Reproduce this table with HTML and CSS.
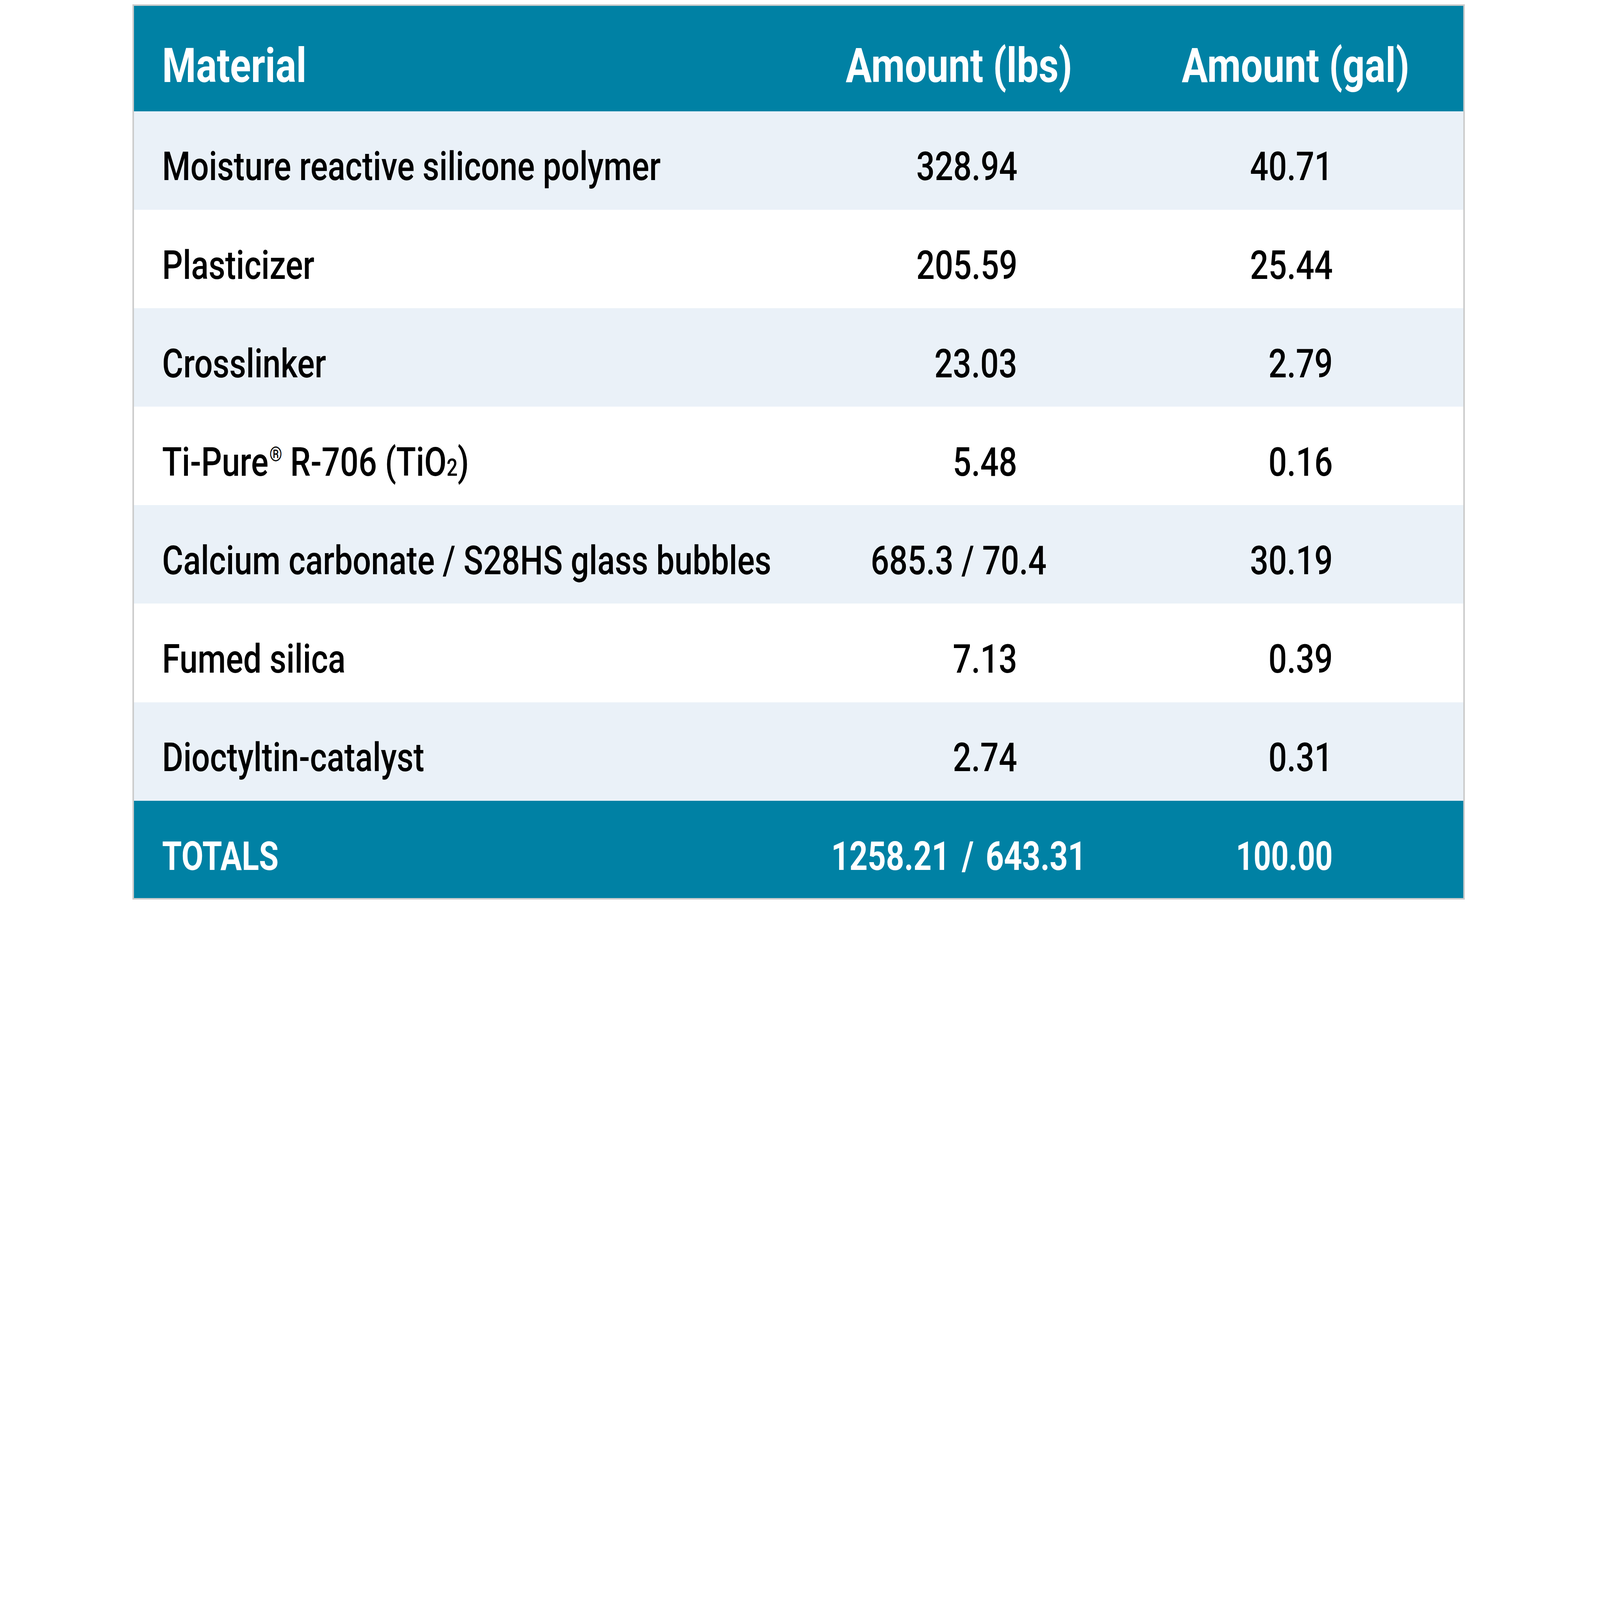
FILE: index.html
```html
<!DOCTYPE html>
<html lang="en">
<head>
<meta charset="utf-8">
<title>Formulation</title>
<link rel="stylesheet" href="styles.css">
</head>
<body>
<div class="page">
  <table class="recipe">
    <colgroup>
      <col class="c-mat">
      <col class="c-lbs">
      <col class="c-gal">
    </colgroup>
    <thead>
      <tr class="head">
        <th class="left"><span class="t">Material</span></th>
        <th class="center"><span class="t">Amount (lbs)</span></th>
        <th class="center"><span class="t">Amount (gal)</span></th>
      </tr>
    </thead>
    <tbody>
      <tr class="odd">
        <td class="left"><span class="t">Moisture reactive silicone polymer</span></td>
        <td class="lbs"><span class="t">328.94</span></td>
        <td class="gal"><span class="t">40.71</span></td>
      </tr>
      <tr>
        <td class="left"><span class="t">Plasticizer</span></td>
        <td class="lbs"><span class="t">205.59</span></td>
        <td class="gal"><span class="t">25.44</span></td>
      </tr>
      <tr class="odd">
        <td class="left"><span class="t">Crosslinker</span></td>
        <td class="lbs"><span class="t">23.03</span></td>
        <td class="gal"><span class="t">2.79</span></td>
      </tr>
      <tr>
        <td class="left"><span class="t">Ti-Pure<sup class="reg">®</sup> R-706 (TiO<sub class="sub">2</sub>)</span></td>
        <td class="lbs"><span class="t">5.48</span></td>
        <td class="gal"><span class="t">0.16</span></td>
      </tr>
      <tr class="odd">
        <td class="left"><span class="t">Calcium carbonate / S28HS glass bubbles</span></td>
        <td class="center"><span class="t">685.3 / 70.4</span></td>
        <td class="gal"><span class="t">30.19</span></td>
      </tr>
      <tr>
        <td class="left"><span class="t">Fumed silica</span></td>
        <td class="lbs"><span class="t">7.13</span></td>
        <td class="gal"><span class="t">0.39</span></td>
      </tr>
      <tr class="odd">
        <td class="left"><span class="t">Dioctyltin-catalyst</span></td>
        <td class="lbs"><span class="t">2.74</span></td>
        <td class="gal"><span class="t">0.31</span></td>
      </tr>
    </tbody>
    <tfoot>
      <tr class="total">
        <td class="left"><span class="t">TOTALS</span></td>
        <td class="center"><span class="t">1258.21 / 643.31</span></td>
        <td class="gal"><span class="t">100.00</span></td>
      </tr>
    </tfoot>
  </table>
</div>
</body>
</html>
```

FILE: styles.css
```css
:root {
  /* one pixel of the 7278px-wide design */
  --u: calc(100vw / 7278);
}

html, body {
  margin: 0;
  padding: 0;
  background: #ffffff;
  overflow: hidden;
}

.page {
  padding-top: calc(19 * var(--u));
  padding-left: calc(603 * var(--u));
}

.recipe {
  border-collapse: separate;
  border-spacing: 0;
  table-layout: fixed;
  width: calc(6061 * var(--u));
  border: calc(8 * var(--u)) solid #cccccc;
  font-family: Roboto, "Liberation Sans", sans-serif;
  color: #000000;
}

.c-mat { width: calc(2981 * var(--u)); }
.c-lbs { width: calc(1538 * var(--u)); }
.c-gal { width: calc(1526 * var(--u)); }

.recipe th,
.recipe td {
  padding: calc(57 * var(--u)) 0 0 0;
  vertical-align: middle;
  white-space: nowrap;
  line-height: normal;
  font-size: calc(181 * var(--u));
  font-weight: 500;
}

.t {
  display: inline-block;
  transform: scaleX(0.815);
  transform-origin: left center;
}

.head {
  height: calc(480 * var(--u));
  background: #0081a4;
}

.recipe .head th {
  color: #ffffff;
  font-size: calc(218 * var(--u));
  font-weight: 700;
  padding-top: calc(66 * var(--u));
}

.head .t {
  transform: scaleX(0.81);
}

tbody tr {
  height: calc(448 * var(--u));
  background: #ffffff;
}

tbody tr.odd {
  background: #eaf1f8;
}

.total {
  height: calc(443 * var(--u));
  background: #0081a4;
}

.recipe .total td {
  color: #ffffff;
  font-weight: 700;
  padding-top: calc(65 * var(--u));
}

.total .t {
  transform: scaleX(0.80);
}

.recipe .total .center {
  word-spacing: calc(23 * var(--u));
}

.recipe .total .gal .t {
  transform: scaleX(0.77);
}

.recipe .left {
  text-align: left;
  padding-left: calc(127 * var(--u));
}

.recipe .center {
  text-align: center;
}

.recipe .center .t {
  transform-origin: center center;
}

.recipe .lbs {
  text-align: right;
  padding-right: calc(503 * var(--u));
}

.recipe .gal {
  text-align: right;
  padding-right: calc(594 * var(--u));
}

.recipe .lbs .t,
.recipe .gal .t {
  transform-origin: right center;
}

.reg {
  font-size: 0.5em;
  vertical-align: 0.75em;
  line-height: 0;
  margin-left: 0.06em;
}

.sub {
  font-size: 0.6em;
  vertical-align: baseline;
  line-height: 0;
}
```
